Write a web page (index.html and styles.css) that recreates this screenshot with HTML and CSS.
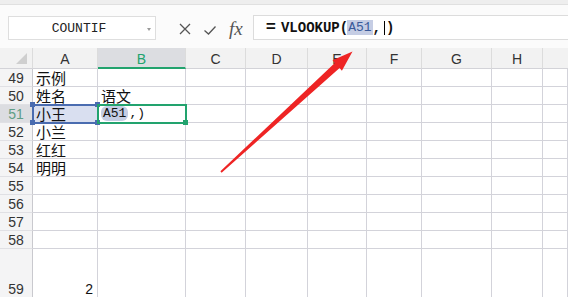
FILE: index.html
```html
<!DOCTYPE html>
<html>
<head>
<meta charset="utf-8">
<link rel="stylesheet" href="styles.css">
</head>
<body>
<div class="top"></div>
<div class="fbar">
  <div class="namebox"><span class="nb-text">COUNTIF</span><i class="dd"></i></div>
  <div class="tools">
    <svg class="ic x" width="14" height="14" viewBox="0 0 14 14"><path d="M2 2 L12 12 M12 2 L2 12" stroke="#555" stroke-width="1.3" fill="none"/></svg>
    <svg class="ic ok" width="14" height="14" viewBox="0 0 14 14"><path d="M1.5 7.5 L5.5 11 L12.5 3.5" stroke="#555" stroke-width="1.3" fill="none"/></svg>
    <span class="fx">fx</span>
  </div>
  <div class="finput"><span class="eq">=</span><b>VLOOKUP(</b><span class="ref">A51</span><b>,</b><span class="caret"></span><b>)</b></div>
</div>
<div class="sheet">
  <div class="ch corner"><i class="tri"></i></div>
  <div class="ch">A</div><div class="ch sel">B</div><div class="ch">C</div><div class="ch">D</div><div class="ch">E</div><div class="ch">F</div><div class="ch">G</div><div class="ch">H</div><div class="ch last"></div>

  <div class="rh">49</div><div class="c">示例</div><div class="c"></div><div class="c"></div><div class="c"></div><div class="c"></div><div class="c"></div><div class="c"></div><div class="c"></div><div class="c"></div>
  <div class="rh">50</div><div class="c">姓名</div><div class="c">语文</div><div class="c"></div><div class="c"></div><div class="c"></div><div class="c"></div><div class="c"></div><div class="c"></div><div class="c"></div>
  <div class="rh sel">51</div><div class="c refcell">小王<i class="h tl"></i><i class="h tr"></i><i class="h bl"></i><i class="h br"></i></div><div class="c active"><span class="ref2">A51</span><span class="mono">,)</span><i class="gh"></i></div><div class="c"></div><div class="c"></div><div class="c"></div><div class="c"></div><div class="c"></div><div class="c"></div><div class="c"></div>
  <div class="rh">52</div><div class="c">小兰</div><div class="c"></div><div class="c"></div><div class="c"></div><div class="c"></div><div class="c"></div><div class="c"></div><div class="c"></div><div class="c"></div>
  <div class="rh">53</div><div class="c">红红</div><div class="c"></div><div class="c"></div><div class="c"></div><div class="c"></div><div class="c"></div><div class="c"></div><div class="c"></div><div class="c"></div>
  <div class="rh">54</div><div class="c">明明</div><div class="c"></div><div class="c"></div><div class="c"></div><div class="c"></div><div class="c"></div><div class="c"></div><div class="c"></div><div class="c"></div>
  <div class="rh">55</div><div class="c"></div><div class="c"></div><div class="c"></div><div class="c"></div><div class="c"></div><div class="c"></div><div class="c"></div><div class="c"></div><div class="c"></div>
  <div class="rh">56</div><div class="c"></div><div class="c"></div><div class="c"></div><div class="c"></div><div class="c"></div><div class="c"></div><div class="c"></div><div class="c"></div><div class="c"></div>
  <div class="rh">57</div><div class="c"></div><div class="c"></div><div class="c"></div><div class="c"></div><div class="c"></div><div class="c"></div><div class="c"></div><div class="c"></div><div class="c"></div>
  <div class="rh">58</div><div class="c"></div><div class="c"></div><div class="c"></div><div class="c"></div><div class="c"></div><div class="c"></div><div class="c"></div><div class="c"></div><div class="c"></div>
  <div class="rh r59">59</div><div class="c num">2</div><div class="c"></div><div class="c"></div><div class="c"></div><div class="c"></div><div class="c"></div><div class="c"></div><div class="c"></div><div class="c"></div>
</div>
<svg class="arrow" width="568" height="297" viewBox="0 0 568 297">
  <polygon points="220.4,171.2 334.8,62.9 332.5,60.3 352.5,51.5 341.9,70.7 339.6,68.1 221.6,172.8" fill="#ee2424"/>
</svg>
</body>
</html>
```
FILE: styles.css
```css
* { box-sizing: border-box; }
html, body { margin: 0; padding: 0; }
body {
  width: 568px;
  height: 297px;
  overflow: hidden;
  background: #ffffff;
  font-family: "Liberation Sans", Arial, sans-serif;
  position: relative;
}
.top {
  height: 5px;
  background: #eeeeee;
  border-bottom: 1px solid #e0e0e0;
}
.fbar {
  height: 43px;
  background: #fbfbfb;
  display: flex;
  align-items: flex-start;
}
.namebox {
  margin: 11px 0 0 8px;
  width: 148px;
  height: 24px;
  background: #fff;
  border: 1px solid #dedede;
  display: flex;
  align-items: center;
  position: relative;
}
.nb-text {
  flex: 1;
  text-align: center;
  font-family: "Liberation Mono", monospace;
  font-size: 13px;
  color: #222;
  padding-right: 6px;
}
.dd {
  position: absolute;
  right: 4px;
  top: 11px;
  width: 0; height: 0;
  border-left: 2.5px solid transparent;
  border-right: 2.5px solid transparent;
  border-top: 3px solid #9a9a9a;
}
.tools {
  display: flex;
  align-items: center;
  margin: 16px 0 0 22px;
  height: 16px;
}
.ic { display: block; }
.ok { margin-left: 11px; margin-top: 2px; }
.fx {
  margin-left: 12px;
  font-family: "Liberation Serif", serif;
  font-style: italic;
  font-size: 19px;
  color: #555;
  line-height: 16px;
}
.finput {
  margin: 10px 0 0 10px;
  flex: 1;
  height: 25px;
  background: #fff;
  border: 1px solid #dcdcdc;
  border-right: none;
  display: flex;
  align-items: center;
  padding-left: 12px;
  font-family: "Liberation Mono", monospace;
  font-size: 14px;
  color: #111;
}
.finput b { font-weight: bold; }
.eq { font-weight: bold; font-size: 17px; margin-right: 5px; }
.ref {
  background: #c5cde4;
  color: #3a5a9a;
  font-size: 13px;
  padding: 0 1px;
  margin-left: -1px;
}
.caret {
  display: inline-block;
  width: 1px;
  height: 14px;
  background: #000;
  margin: 0 1px 0 3px;
}
.sheet {
  display: grid;
  grid-template-columns: 33px 65px 88px 60px 62px 59px 55px 70px 51px 25px;
  grid-template-rows: 21px repeat(10, 18px) 49px;
}
.ch {
  background: #f2f2f2;
  border-right: 1px solid #dcdcdc;
  border-bottom: 1px solid #d3d3d8;
  font-size: 14px;
  color: #333;
  display: flex;
  align-items: center;
  justify-content: center;
  padding-top: 2px;
}
.ch.last { border-right: none; }
.ch.sel {
  background: #dcdde1;
  color: #22a36e;
  border-bottom: 2px solid #22a36e;
}
.corner { position: relative; }
.tri {
  position: absolute;
  right: 5px;
  bottom: 4px;
  width: 0; height: 0;
  border-left: 11px solid transparent;
  border-bottom: 11px solid #cfcfcf;
}
.rh {
  background: #f4f4f5;
  border-right: 1px solid #c9c9ce;
  border-bottom: 1px solid #e0e0e4;
  font-size: 14px;
  color: #333;
  display: flex;
  align-items: flex-end;
  justify-content: center;
  line-height: 16px;
}
.rh.r59 { border-bottom: none; padding-bottom: 1px; }
.rh.sel { background: #dcdde1; color: #5f9e86; }
.c {
  border-right: 1px solid #d3d3da;
  border-bottom: 1px solid #d3d3da;
  font-family: "Noto Sans CJK SC", "Liberation Sans", sans-serif;
  font-size: 15px;
  color: #111;
  display: flex;
  align-items: flex-end;
  padding-left: 3px;
  line-height: 16px;
  position: relative;
}
.c.num {
  justify-content: flex-end;
  padding-right: 4px;
  font-family: "Liberation Sans", sans-serif;
  font-size: 14px;
  line-height: 16px;
  padding-bottom: 1px;
  border-bottom: none;
}
.refcell {
  background: #d9dff0;
  outline: 2px solid #4a6cb0;
  outline-offset: -1px;
  z-index: 2;
}
.h {
  position: absolute;
  width: 5px; height: 5px;
  background: #4a6cb0;
}
.h.tl { left: -3px; top: -3px; }
.h.tr { right: -3px; top: -3px; }
.h.bl { left: -3px; bottom: -3px; }
.h.br { right: -3px; bottom: -3px; }
.active {
  outline: 2px solid #22a36e;
  outline-offset: -1px;
  z-index: 3;
  font-family: "Liberation Mono", monospace;
  font-size: 13px;
  align-items: center;
}
.ref2 {
  background: #c5cde4;
  border-radius: 6px;
  padding: 0 2px;
  line-height: 15px;
}
.mono { margin-left: 1px; }
.gh {
  position: absolute;
  right: -3px;
  bottom: -3px;
  width: 5px; height: 5px;
  background: #22a36e;
}
.arrow {
  position: absolute;
  left: 0;
  top: 0;
  pointer-events: none;
  z-index: 10;
}
```
